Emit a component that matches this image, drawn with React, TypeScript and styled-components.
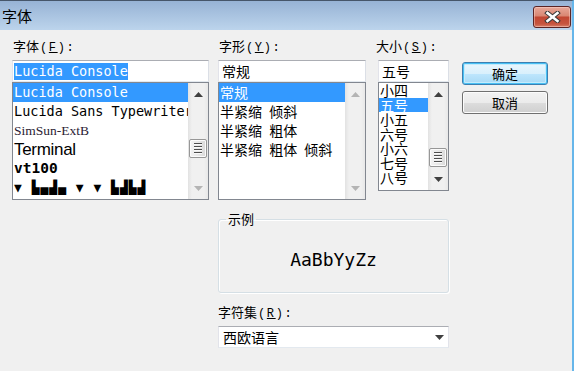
import React from "react";
import styled, { createGlobalStyle, css } from "styled-components";

const GlobalStyle = createGlobalStyle`
  html, body {
    margin: 0;
    padding: 0;
    background: #f0f0f0;
  }
  body {
    font-family: "Noto Sans CJK SC", "Liberation Sans", sans-serif;
    color: #000;
  }
`;

type Face = "lucida" | "simsun" | "terminal" | "vt100" | "symbol" | "cjk";

const faces: Record<Face, ReturnType<typeof css>> = {
   lucida: css`
      font-family: "DejaVu Sans Mono", monospace;
      font-size: 13.5px;
   `,
   simsun: css`
      font-family: "Liberation Serif", serif;
      font-size: 13.5px;
      color: #2b2233;
   `,
   terminal: css`
      font-family: "Liberation Sans", sans-serif;
      font-size: 17px;
      letter-spacing: -0.3px;
   `,
   vt100: css`
      font-family: "DejaVu Sans Mono", monospace;
      font-size: 14.5px;
      font-weight: bold;
   `,
   symbol: css`
      font-family: "DejaVu Sans Mono", monospace;
      font-size: 13px;
      font-weight: bold;
      letter-spacing: 1px;
   `,
   cjk: css`
      font-family: "Noto Sans CJK SC", sans-serif;
      font-size: 14px;
      word-spacing: 4px;
   `,
};

const fonts: { name: string; face: Face }[] = [
   { name: "Lucida Console", face: "lucida" },
   { name: "Lucida Sans Typewriter", face: "lucida" },
   { name: "SimSun-ExtB", face: "simsun" },
   { name: "Terminal", face: "terminal" },
   { name: "vt100", face: "vt100" },
   { name: "▼ ▙▄▟▄ ▼ ▼ ▙▟▙▟", face: "symbol" },
];

const styles = ["常规", "半紧缩 倾斜", "半紧缩 粗体", "半紧缩 粗体 倾斜"];
const sizes = ["小四", "五号", "小五", "六号", "小六", "七号", "八号"];

const Arrow = ({ up, dim }: { up?: boolean; dim?: boolean }) => (
   <svg width="9" height="5" viewBox="0 0 9 5">
      <path d={up ? "M0 5 L4.5 0 L9 5Z" : "M0 0 L4.5 5 L9 0Z"} fill={dim ? "#b4b4b4" : "#404040"} />
   </svg>
);

const Scroll = ({ thumb, dimUp, dimDown }: { thumb?: number; dimUp?: boolean; dimDown?: boolean }) => (
   <ScrollBar>
      <ArrowBox>
         <Arrow up dim={dimUp} />
      </ArrowBox>
      <Track>
         {thumb !== undefined && (
            <Thumb $top={thumb}>
               <Grip>
                  <i />
                  <i />
                  <i />
                  <i />
               </Grip>
            </Thumb>
         )}
      </Track>
      <ArrowBox>
         <Arrow dim={dimDown} />
      </ArrowBox>
   </ScrollBar>
);

export default function App() {
   return (
      <>
         <GlobalStyle />
         <Window>
            <TitleBar>
               <Title>字体</Title>
               <CloseButton>
                  <svg width="17" height="12" viewBox="0 0 17 12">
                     <path d="M3.5 2 L13.5 10 M13.5 2 L3.5 10" stroke="#3a3a3a" strokeWidth="4.6" strokeLinecap="square" />
                     <path d="M3.5 2 L13.5 10 M13.5 2 L3.5 10" stroke="#fff" strokeWidth="2.6" strokeLinecap="square" />
                  </svg>
               </CloseButton>
            </TitleBar>

            <Body>
               <Column>
                  <Label>
                     字体<Hotkey>(<u>F</u>):</Hotkey>
                  </Label>
                  <TextBox $width={197}>
                     <Selection>Lucida Console</Selection>
                  </TextBox>
                  <ListBox $width={197} $height={118}>
                     <Items>
                        {fonts.map((f, i) => (
                           <Item key={f.name} $face={f.face} $height={19} $selected={i === 0}>
                              {f.name}
                           </Item>
                        ))}
                     </Items>
                     <Scroll thumb={34} dimDown />
                  </ListBox>
               </Column>

               <Column>
                  <Label>
                     字形<Hotkey>(<u>Y</u>):</Hotkey>
                  </Label>
                  <TextBox $width={148}>常规</TextBox>
                  <ListBox $width={148} $height={118}>
                     <Items>
                        {styles.map((s, i) => (
                           <Item key={s} $face="cjk" $height={19} $selected={i === 0}>
                              {s}
                           </Item>
                        ))}
                     </Items>
                     <Scroll dimUp dimDown />
                  </ListBox>
               </Column>

               <Column $shift={-2}>
                  <Label>
                     大小<Hotkey>(<u>S</u>):</Hotkey>
                  </Label>
                  <TextBox $width={71}>五号</TextBox>
                  <ListBox $width={71} $height={109}>
                     <Items>
                        {sizes.map((s, i) => (
                           <Item key={s} $face="cjk" $height={14.5} $selected={i === 1}>
                              {s}
                           </Item>
                        ))}
                     </Items>
                     <Scroll thumb={43} />
                  </ListBox>
               </Column>

               <Buttons>
                  <DialogButton $primary>确定</DialogButton>
                  <DialogButton>取消</DialogButton>
               </Buttons>

               <Lower>
                  <Group>
                     <Legend>示例</Legend>
                     <Sample>AaBbYyZz</Sample>
                  </Group>
                  <Label $top={11}>
                     字符集<Hotkey>(<u>R</u>):</Hotkey>
                  </Label>
                  <Combo>
                     <span>西欧语言</span>
                     <Arrow />
                  </Combo>
               </Lower>
            </Body>
         </Window>
      </>
   );
}

const Window = styled.div`
   width: 574px;
   height: 371px;
   box-sizing: border-box;
   display: flex;
   flex-direction: column;
   background: #f0f0f0;
   border-top: 1px solid #46566a;
   border-right: 2px solid #66b6ea;
   overflow: hidden;
`;

const TitleBar = styled.div`
   height: 29px;
   flex: none;
   display: flex;
   align-items: center;
   justify-content: space-between;
   padding: 0 1px 0 2px;
   background: linear-gradient(#97b3d5, #bcd4ec);
`;

const Title = styled.div`
   font-size: 15px;
   line-height: 18px;
`;

const CloseButton = styled.div`
   width: 38px;
   height: 22px;
   box-sizing: border-box;
   margin-top: 2px;
   display: flex;
   align-items: center;
   justify-content: center;
   border: 1px solid #5b2424;
   border-radius: 3px;
   background: linear-gradient(#e8a899, #d98672 45%, #c24632 50%, #c6553f 85%, #d8806a);
   box-shadow: inset 0 0 0 1px rgba(255, 220, 210, 0.45);
`;

const Body = styled.div`
   flex: 1;
   display: grid;
   grid-template-columns: 206px 160px 83px 88px;
   align-content: start;
   padding: 8px 0 0 12px;
`;

const Column = styled.div<{ $shift?: number }>`
   display: flex;
   flex-direction: column;
   align-items: flex-start;
   ${(p) => p.$shift && `margin-left: ${p.$shift}px; padding-left: ${-p.$shift}px;`}
   & > div:first-child {
      margin-left: ${(p) => p.$shift ?? 1}px;
   }
`;

const Label = styled.div<{ $top?: number }>`
   height: 16px;
   line-height: 16px;
   font-size: 13px;
   white-space: nowrap;
   margin: ${(p) => p.$top ?? 0}px 0 6px;
`;

const Hotkey = styled.span`
   font-family: "Liberation Mono", monospace;
   font-size: 12px;
   letter-spacing: 1.6px;
   margin-left: 1px;

   u {
      text-underline-offset: 1px;
   }
`;

const TextBox = styled.div<{ $width: number }>`
   width: ${(p) => p.$width}px;
   height: 22px;
   box-sizing: border-box;
   display: flex;
   align-items: center;
   padding-left: 3px;
   background: #fff;
   border: 1px solid;
   border-color: #abadb3 #dbdfe6 #e3e9ef #e2e3ea;
   font-size: 14px;
   white-space: nowrap;
`;

const Selection = styled.span`
   margin-left: -2px;
   font-family: "DejaVu Sans Mono", monospace;
   font-size: 13.5px;
   line-height: 17px;
   background: #3399ff;
   color: #fff;
`;

const ListBox = styled.div<{ $width: number; $height: number }>`
   width: ${(p) => p.$width}px;
   height: ${(p) => p.$height}px;
   box-sizing: border-box;
   display: flex;
   background: #fff;
   border: 1px solid #828790;
`;

const Items = styled.div`
   flex: 1;
   min-width: 0;
   overflow: hidden;
`;

const Item = styled.div<{ $face: Face; $height: number; $selected?: boolean }>`
   height: ${(p) => p.$height}px;
   line-height: ${(p) => p.$height}px;
   padding-left: 1px;
   white-space: nowrap;
   overflow: visible;
   ${(p) => faces[p.$face]}
   ${(p) =>
      p.$selected &&
      css`
         background: #3399ff;
         color: #fff;
      `}
`;

const ScrollBar = styled.div`
   width: 20px;
   flex: none;
   display: flex;
   flex-direction: column;
   background: linear-gradient(to right, #e2e2e2, #f0f0f0 20%, #f0f0f0 80%, #e8e8e8);
`;

const ArrowBox = styled.div`
   height: 22px;
   flex: none;
   display: flex;
   align-items: center;
   justify-content: center;
`;

const Track = styled.div`
   flex: 1;
`;

const Thumb = styled.div<{ $top: number }>`
   margin: ${(p) => p.$top}px 1px 0;
   height: 19px;
   box-sizing: border-box;
   display: flex;
   align-items: center;
   justify-content: center;
   border: 1px solid #979797;
   border-radius: 2px;
   background: linear-gradient(to right, #f4f4f4, #e8e8e8 50%, #d9d9d9);
   box-shadow: inset 0 0 0 1px #fbfbfb;
`;

const Grip = styled.div`
   display: flex;
   flex-direction: column;
   gap: 1px;

   i {
      display: block;
      width: 8px;
      height: 1px;
      background: #4e4e4e;
      border-bottom: 1px solid #fafafa;
   }
`;

const Buttons = styled.div`
   display: flex;
   flex-direction: column;
   gap: 6px;
   padding: 24px 0 0 1px;
`;

const DialogButton = styled.button<{ $primary?: boolean }>`
   width: 86px;
   height: 23px;
   padding: 0;
   font-family: "Noto Sans CJK SC", sans-serif;
   font-size: 13px;
   line-height: 20px;
   color: #000;
   border: 1px solid #707070;
   border-radius: 3px;
   background: linear-gradient(#f2f2f2, #ebebeb 50%, #dddddd 51%, #cfcfcf);
   box-shadow: inset 0 0 0 1px #fcfcfc;

   ${(p) =>
      p.$primary &&
      css`
         border-color: #3c7fb1;
         background: linear-gradient(#eaf6fd, #d9f0fc 50%, #bee6fd 51%, #a7d9f5);
         box-shadow: inset 0 0 0 1px #48c0f4, inset 0 0 0 2px #c4ebfc;
      `}
`;

const Lower = styled.div`
   grid-column: 2 / 4;
   width: 231px;
   display: flex;
   flex-direction: column;
`;

const Group = styled.fieldset`
   margin: 11px 0 0;
   padding: 0;
   min-width: 0;
   height: 82px;
   box-sizing: border-box;
   border: 1px solid #d5dfe5;
   border-radius: 3px;
   box-shadow: inset 1px 1px 0 #fff, 1px 1px 0 #fff;
`;

const Legend = styled.legend`
   margin-left: 7px;
   padding: 0 2px;
   font-size: 13px;
   line-height: 16px;
`;

const Sample = styled.div`
   height: 62px;
   display: flex;
   align-items: center;
   justify-content: center;
   padding-top: 2px;
   box-sizing: border-box;
   font-family: "DejaVu Sans Mono", monospace;
   font-size: 18px;
`;

const Combo = styled.div`
   height: 22px;
   box-sizing: border-box;
   display: flex;
   align-items: center;
   justify-content: space-between;
   padding: 0 4px 0 4px;
   background: #fff;
   border: 1px solid;
   border-color: #abadb3 #e2e3ea #e3e9ef #e2e3ea;
   font-size: 14px;
`;
